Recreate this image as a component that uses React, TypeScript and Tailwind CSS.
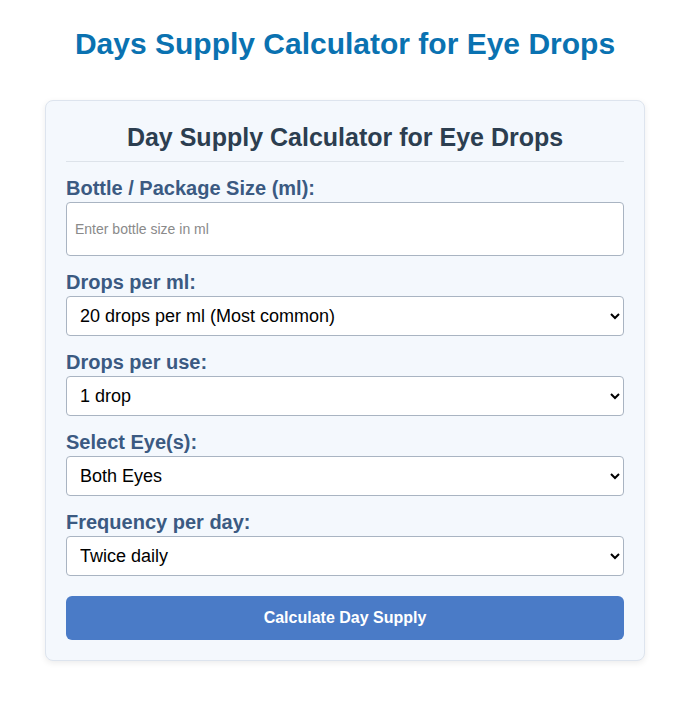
import { useState } from "react";

const fieldLabel = "block text-[20px] font-bold leading-[24px] text-[#3b5a82] mb-[2px]";
const selectCls =
  "w-full h-[40px] bg-white border border-[#a9b4c2] rounded-[4px] pl-[9px] pr-[6px] text-[18px] text-black";

export default function App() {
  const [size, setSize] = useState("");
  const [perMl, setPerMl] = useState("20");
  const [perUse, setPerUse] = useState("1");
  const [eyes, setEyes] = useState("2");
  const [freq, setFreq] = useState("2");

  return (
    <div className="min-h-[708px] bg-white pt-[26px] font-['Liberation_Sans',Arial,sans-serif]">
      <h1 className="text-center text-[30px] font-bold leading-[36px] text-[#0a72b1]">
        Days Supply Calculator for Eye Drops
      </h1>

      <div className="mx-auto mt-[38px] w-[600px] rounded-[8px] border border-[#dde4ee] bg-[#f4f8fd] px-[20px] pt-[20px] pb-[20px] shadow-[0_2px_6px_rgba(0,0,0,0.08)]">
        <h2 className="border-b border-[#dde3ea] pb-[8px] text-center text-[25px] font-bold leading-[32px] text-[#2c3e50]">
          Day Supply Calculator for Eye Drops
        </h2>

        <div className="mt-[14px] flex flex-col gap-[14px]">
          <div>
            <label className={fieldLabel}>Bottle / Package Size (ml):</label>
            <input
              type="number"
              value={size}
              onChange={(e) => setSize(e.target.value)}
              placeholder="Enter bottle size in ml"
              className="w-full h-[54px] bg-white border border-[#a9b4c2] rounded-[4px] px-[8px] text-[14px] text-black placeholder:text-[#8a8a8a]"
            />
          </div>

          <div>
            <label className={fieldLabel}>Drops per ml:</label>
            <select value={perMl} onChange={(e) => setPerMl(e.target.value)} className={selectCls}>
              <option value="15">15 drops per ml</option>
              <option value="20">20 drops per ml (Most common)</option>
              <option value="25">25 drops per ml</option>
            </select>
          </div>

          <div>
            <label className={fieldLabel}>Drops per use:</label>
            <select value={perUse} onChange={(e) => setPerUse(e.target.value)} className={selectCls}>
              <option value="1">1 drop</option>
              <option value="2">2 drops</option>
            </select>
          </div>

          <div>
            <label className={fieldLabel}>Select Eye(s):</label>
            <select value={eyes} onChange={(e) => setEyes(e.target.value)} className={selectCls}>
              <option value="1">One Eye</option>
              <option value="2">Both Eyes</option>
            </select>
          </div>

          <div>
            <label className={fieldLabel}>Frequency per day:</label>
            <select value={freq} onChange={(e) => setFreq(e.target.value)} className={selectCls}>
              <option value="1">Once daily</option>
              <option value="2">Twice daily</option>
              <option value="3">Three times daily</option>
              <option value="4">Four times daily</option>
            </select>
          </div>
        </div>

        <button className="mt-[20px] h-[44px] w-full rounded-[6px] bg-[#4a7bc7] text-[16px] font-bold text-white">
          Calculate Day Supply
        </button>
      </div>
    </div>
  );
}
